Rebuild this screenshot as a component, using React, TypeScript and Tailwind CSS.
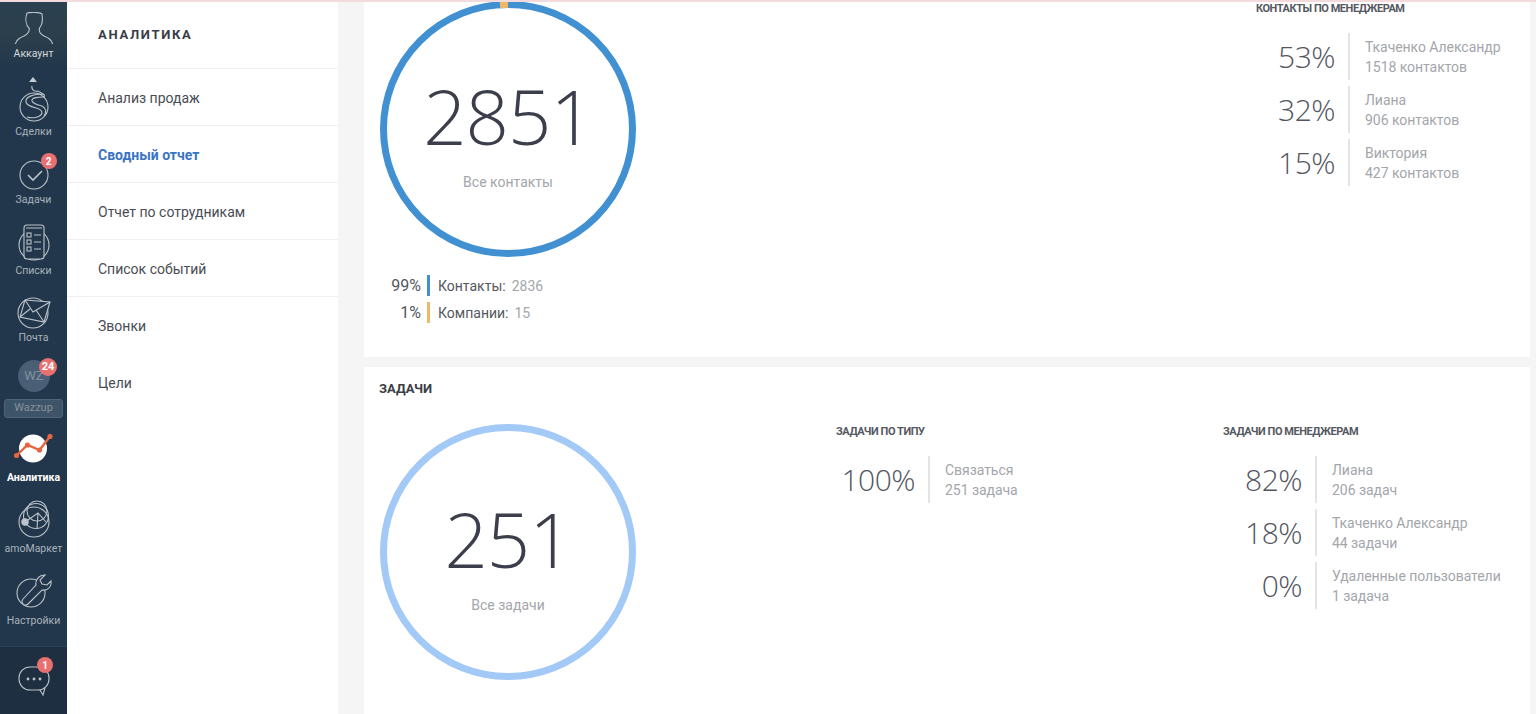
import React from "react";

const PT = "font-['Roboto','Liberation_Sans',sans-serif]";

function Ring({ color, accent, value, label }: { color: string; accent?: boolean; value: string; label: string }) {
  return (
    <div className="relative w-[256px] h-[256px] shrink-0">
      <svg width="256" height="256" viewBox="0 0 256 256" className="absolute inset-0">
        <circle cx="128" cy="128" r="124.5" fill="none" stroke={color} strokeWidth="7" />
        {accent && <path d="M120 3.7 A124.5 124.5 0 0 1 128 3.5" fill="none" stroke="#efb868" strokeWidth="7" />}
      </svg>
      <div className="absolute inset-0 flex flex-col items-center">
        <div className="font-['Open_Sans',sans-serif] font-light text-[#3c3f4b] leading-none mt-[77px] text-[76px] tracking-[-1px]">{value}</div>
        <div className="text-[14px] text-[#a3a6ab] mt-[18px] leading-[20px]">{label}</div>
      </div>
    </div>
  );
}

function Stat({ pct, name, sub }: { pct: string; name: string; sub: string }) {
  return (
    <div className="flex items-stretch h-[47px] mb-[6px]">
      <div className="w-[79px] text-right font-['Open_Sans',sans-serif] font-light text-[30px] tracking-[-0.5px] text-[#53565f] leading-[47px] whitespace-nowrap">{pct}</div>
      <div className="ml-[13px] w-[2px] bg-[#e2e5e8]" />
      <div className="pl-[15px] text-[14px] tracking-[-0.05px] leading-[20px] text-[#a3a6ab] pt-[4px] whitespace-nowrap">
        <div>{name}</div>
        <div>{sub}</div>
      </div>
    </div>
  );
}

function Title({ children }: { children: React.ReactNode }) {
  return <div className="text-[11px] font-bold text-[#55585f] leading-[14px] whitespace-nowrap tracking-[-0.45px]">{children}</div>;
}

function NavItem({ label, icon, h, bold }: { label: string; icon: React.ReactNode; h: string; bold?: boolean }) {
  return (
    <div className={`flex flex-col items-center justify-end shrink-0 ${h}`}>
      {icon}
      <div className={`text-[10.5px] leading-[14px] mt-[2px] whitespace-nowrap ${bold ? "text-white font-bold" : "text-[#a9b3bd]"}`}>{label}</div>
    </div>
  );
}

const Badge = ({ n, cls }: { n: string; cls: string }) => (
  <div className={`absolute flex items-center justify-center rounded-full bg-[#e8706f] text-white text-[10px] font-bold ${cls}`}>{n}</div>
);

const stroke = { fill: "none", stroke: "#bcc3ca", strokeWidth: 1.1 };

export default function App() {
  return (
    <div className={`relative flex h-[714px] w-full overflow-hidden bg-[#f5f5f5] ${PT}`}>
      <div className="absolute left-0 right-0 top-0 h-[2px] bg-[#f3dadd] z-10" />
      {/* Sidebar */}
      <div className="w-[67px] shrink-0 bg-[#22374b] flex flex-col">
        <div className="h-[68px] bg-gradient-to-b from-[#2b4050] via-[#2b3f4c] to-[#22374b] shrink-0 flex flex-col items-center">
          <svg width="38" height="33" viewBox="0 0 38 33" className="mt-[12px] mb-[2px]" {...stroke}>
            <path d="M12 1 C15 0 25 0 27 2 C28 8 27 13 24.5 16 C23.5 20 25 22 29 24 C34 26 37 28 37.5 32 M12 1 C10 7 11 13 14 16 C15 20 13 22 9 24 C4 26 1 28 0.5 32" />
          </svg>
          <div className="text-[10.5px] leading-[14px] text-[#d5dade]">Аккаунт</div>
        </div>
        <div className="relative">
          <div className="absolute left-[29px] top-[9px] w-0 h-0 border-x-[4px] border-x-transparent border-b-[5px] border-b-[#c5ccd2]" />
        </div>
        <NavItem h="h-[71px]" label="Сделки" icon={
          <svg width="30" height="42" viewBox="0 0 30 42" {...stroke}>
            <circle cx="15" cy="26" r="14" />
            <path d="M13 5 C12 9 16 11 19 10 L24 13 C14 13 6 16 7 21 C8 25 13 26 17 27 C21 28 23 29 23 32 C22 36 14 38 8 36 M24 13 C26 14 26 16 24 16 C18 16 12 17 13 20 C14 23 19 24 23 25 C27 27 28 31 25 35" />
          </svg>
        } />
        <NavItem h="h-[68px]" label="Задачи" icon={
          <div className="relative">
            <svg width="30" height="32" viewBox="0 0 30 32" {...stroke}>
              <circle cx="15" cy="16" r="14" />
              <path d="M9 16 L14 21 L23 12" strokeWidth="1.6" />
            </svg>
            <Badge n="2" cls="w-[16px] h-[16px] -right-[8px] -top-[6px]" />
          </div>
        } />
        <NavItem h="h-[71px]" label="Списки" icon={
          <svg width="32" height="38" viewBox="0 0 32 38" {...stroke}>
            <circle cx="16" cy="21" r="15" />
            <rect x="6" y="1" width="20" height="34" rx="3" fill="#22374b" />
            <path d="M8 4 H24 M16 11 H23 M16 18 H23 M16 25 H23" />
            <rect x="9" y="9" width="4" height="4" /><rect x="9" y="16" width="4" height="4" /><rect x="9" y="23" width="4" height="4" />
          </svg>
        } />
        <NavItem h="h-[67px]" label="Почта" icon={
          <svg width="34" height="32" viewBox="0 0 34 32" {...stroke}>
            <circle cx="16" cy="16" r="15" />
            <path d="M8 3 L33 5 L27 25 L3 20 Z" fill="#22374b" />
            <path d="M8 3 L16 15 L33 5 M3 20 L13 12 M27 25 L19 13" />
          </svg>
        } />
        <div className="relative mt-[15px] ml-[18px] w-[32px] h-[32px] rounded-full bg-[#4a5f75] text-[#83929f] flex items-center justify-center text-[13px] shrink-0">
          WZ
          <Badge n="24" cls="w-[18px] h-[18px] -right-[7px] -top-[2px] text-[11px]" />
        </div>
        <div className="mt-[7px] mx-[4px] h-[19px] rounded-[3px] bg-[#3e5468] border border-[#4f6479] text-[#83929f] text-[11px] flex items-center justify-center shrink-0">Wazzup</div>
        <NavItem h="h-[67px]" bold label="Аналитика" icon={
          <svg width="40" height="30" viewBox="0 0 40 30" className="mb-[5px]">
            <circle cx="19" cy="14.5" r="14" fill="#fff" />
            <path d="M2.5 21.5 L13.5 11 L25.5 16 L36 2.5" fill="none" stroke="#e7653f" strokeWidth="2.4" />
            <circle cx="2.5" cy="21.5" r="2.6" fill="#e7653f" /><circle cx="13.5" cy="11" r="2.6" fill="#e7653f" /><circle cx="25.5" cy="16" r="2.6" fill="#e7653f" /><circle cx="36" cy="2.5" r="2.6" fill="#e7653f" />
          </svg>
        } />
        <NavItem h="h-[71px]" label="amoМаркет" icon={
          <svg width="32" height="38" viewBox="0 0 32 38" className="mb-[2px]" {...stroke}>
            <circle cx="16" cy="22" r="15" />
            <circle cx="18" cy="16" r="12.5" />
            <circle cx="19" cy="11" r="10" />
            <circle cx="7" cy="22" r="3.2" fill="#bcc3ca" />
            <path d="M7 22 L20 13 L28 22 M20 13 L19 29" />
          </svg>
        } />
        <NavItem h="h-[72px]" label="Настройки" icon={
          <svg width="36" height="34" viewBox="0 0 36 34" className="mb-[4px]" {...stroke}>
            <circle cx="15" cy="19" r="14" />
            <path d="M29 1 L24 6 L26 10 L31 11 L35 7 C36 13 31 17 26 16 L12 30 C9 33 4 29 7 25 L20 11 C19 6 23 1 29 1 Z" fill="#22374b" />
          </svg>
        } />
        <div className="mt-[18px] flex-1 bg-[#1d2f40] border-t border-[#2b4054] relative flex justify-center pt-[19px]">
          <svg width="32" height="30" viewBox="0 0 32 30" {...stroke}>
            <rect x="1" y="1" width="30" height="23" rx="11" />
            <path d="M22 24 L25 29 L27 22" />
            <circle cx="10" cy="13" r="0.9" fill="#bcc3ca" /><circle cx="16" cy="13" r="0.9" fill="#bcc3ca" /><circle cx="22" cy="13" r="0.9" fill="#bcc3ca" />
          </svg>
          <Badge n="1" cls="w-[16px] h-[16px] left-[37px] top-[10px]" />
        </div>
      </div>
      {/* Menu */}
      <div className="w-[271px] shrink-0 bg-white flex flex-col text-[14px] text-[#4a4c54]">
        <div className="h-[69px] pl-[31px] pt-[2px] flex items-center border-b border-[#eef0f1] text-[13px] font-bold tracking-[1.7px] text-[#3a3d46]">АНАЛИТИКА</div>
        {["Анализ продаж", "Сводный отчет", "Отчет по сотрудникам", "Список событий", "Звонки", "Цели"].map((t, i) => (
          <div key={t} className={`h-[57px] pl-[31px] pt-[2px] flex items-center ${i < 4 ? "border-b border-[#eef0f1]" : ""} ${i === 1 ? "text-[#3a74c4] font-bold" : ""}`}>{t}</div>
        ))}
      </div>
      {/* Content */}
      <div className="flex-1 pl-[26px] pr-[6px] flex flex-col gap-[10px] min-w-0">
        <div className="h-[357px] shrink-0 bg-white pl-[16px] flex">
          <div className="shrink-0 pt-[1px]">
            <Ring color="#4191d2" accent value="2851" label="Все контакты" />
            <div className="mt-[15px] text-[14px] text-[#555860] leading-[20px]">
              {[["99%", "Контакты:", "2836", "bg-[#4191d2]"], ["1%", "Компании:", "15", "bg-[#efb868]"]].map(([p, n, v, c]) => (
                <div key={n} className="flex items-center h-[27px]">
                  <div className="w-[41px] text-right text-[16px]">{p}</div>
                  <div className={`ml-[6px] mr-[8px] w-[3px] h-[21px] ${c}`} />
                  <div>{n}</div>
                  <div className="ml-[6px] text-[#a3a6ab]">{v}</div>
                </div>
              ))}
            </div>
          </div>
          <div className="ml-[620px] pt-[2px]">
            <Title>КОНТАКТЫ ПО МЕНЕДЖЕРАМ</Title>
            <div className="mt-[17px]">
              <Stat pct="53%" name="Ткаченко Александр" sub="1518 контактов" />
              <Stat pct="32%" name="Лиана" sub="906 контактов" />
              <Stat pct="15%" name="Виктория" sub="427 контактов" />
            </div>
          </div>
        </div>
        <div className="flex-1 bg-white pl-[16px] pt-[14px] min-h-0">
          <div className="text-[13px] font-bold text-[#3a3d46] leading-[16px] -ml-[1px]">ЗАДАЧИ</div>
          <div className="flex mt-[27px]">
            <div className="shrink-0">
              <Ring color="#a3c9f7" value="251" label="Все задачи" />
            </div>
            <div className="ml-[200px] w-[387px] shrink-0 pt-[1px]">
              <Title>ЗАДАЧИ ПО ТИПУ</Title>
              <div className="mt-[17px]">
                <Stat pct="100%" name="Связаться" sub="251 задача" />
              </div>
            </div>
            <div className="pt-[1px]">
              <Title>ЗАДАЧИ ПО МЕНЕДЖЕРАМ</Title>
              <div className="mt-[17px]">
                <Stat pct="82%" name="Лиана" sub="206 задач" />
                <Stat pct="18%" name="Ткаченко Александр" sub="44 задачи" />
                <Stat pct="0%" name="Удаленные пользователи" sub="1 задача" />
              </div>
            </div>
          </div>
        </div>
      </div>
    </div>
  );
}
